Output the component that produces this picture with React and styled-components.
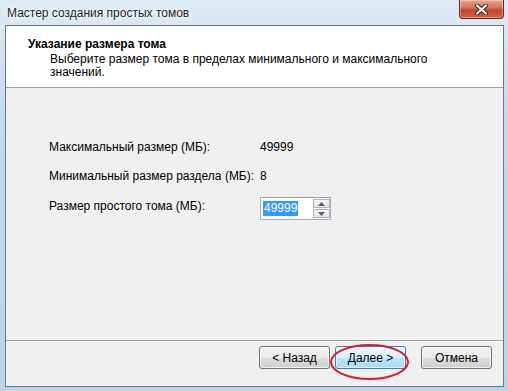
import React from 'react';
import styled, { createGlobalStyle } from 'styled-components';

const GlobalStyle = createGlobalStyle`
  html, body {
    margin: 0;
    padding: 0;
    background: #c9dcef;
  }
  body {
    font-family: "Liberation Sans", Arial, sans-serif;
    font-size: 12px;
    color: #000;
  }
`;

const Frame = styled.div`
  width: 508px;
  height: 391px;
  box-sizing: border-box;
  padding: 0 4px 4px 5px;
  display: flex;
  flex-direction: column;
  background: linear-gradient(180deg, #dfeaf5 0%, #c6d9ec 30%, #bcd3ea 100%);
`;

const TitleBar = styled.div`
  height: 25px;
  display: flex;
  align-items: flex-start;
  justify-content: space-between;
  flex-shrink: 0;
`;

const Title = styled.div`
  padding: 6px 0 0 2px;
  font-size: 12px;
  color: #1e1e1e;
  text-shadow: 0 0 6px #fff, 0 0 3px #fff;
`;

const CloseButton = styled.div`
  width: 45px;
  height: 19px;
  box-sizing: border-box;
  border: 1px solid #6b2b24;
  border-top: none;
  border-radius: 0 0 4px 4px;
  background: linear-gradient(180deg, #e8a493 0%, #d2715a 45%, #c1462d 55%, #d0623f 100%);
  box-shadow: inset 0 0 0 1px rgba(255, 255, 255, 0.35);
  display: flex;
  align-items: center;
  justify-content: center;
`;

const Client = styled.div`
  flex: 1;
  display: flex;
  flex-direction: column;
  border: 1px solid #6a7686;
  background: #f0f0f0;
`;

const Header = styled.div`
  height: 62px;
  flex-shrink: 0;
  background: #fff;
  border-bottom: 1px solid #a0a0a0;
  box-sizing: border-box;
  padding: 11px 0 0 22px;
`;

const HeaderTitle = styled.div`
  font-weight: bold;
  font-size: 12px;
  line-height: 14px;
`;

const HeaderText = styled.div`
  margin-left: 22px;
  width: 400px;
  line-height: 13px;
  padding-top: 2px;
`;

const Body = styled.div`
  flex: 1;
  display: grid;
  grid-template-columns: 211px auto;
  grid-auto-rows: min-content;
  row-gap: 15px;
  align-items: start;
  padding: 52px 0 0 43px;
  border-bottom: 1px solid #a0a0a0;
  box-shadow: 0 1px 0 #fff;
`;

const Label = styled.div`
  height: 14px;
  line-height: 14px;
  white-space: nowrap;
  margin-top: ${p => p.$tall ? '1px' : '0'};
`;

const Spin = styled.div`
  display: flex;
  width: 71px;
  height: 23px;
  box-sizing: border-box;
  border: 1px solid #abadb3;
  border-top-color: #8c9fb4;
  background: #fff;
  margin-top: -1px;
`;

const SpinText = styled.div`
  flex: 1;
  padding: 3px 0 0 2px;
`;

const Selected = styled.span`
  background: #3399ff;
  color: #fff;
  line-height: 15px;
  display: inline-block;
  padding: 0 1px;
`;

const Arrows = styled.div`
  width: 17px;
  display: flex;
  flex-direction: column;
  gap: 1px;
  padding: 1px 0;
`;

const Arrow = styled.div`
  flex: 1;
  border: 1px solid #b5b5b5;
  background: linear-gradient(180deg, #f6f6f6, #e2e2e2);
  display: flex;
  align-items: center;
  justify-content: center;
`;

const Footer = styled.div`
  height: 45px;
  flex-shrink: 0;
  display: flex;
  justify-content: flex-end;
  align-items: flex-start;
  padding: 5px 11px 0 0;
  box-sizing: border-box;
  gap: 5px;
`;

const ButtonWrap = styled.div`
  position: relative;
  margin-left: ${p => p.$gap || 0}px;
`;

const Button = styled.div`
  width: 71px;
  height: 23px;
  box-sizing: border-box;
  border: 1px solid ${p => p.$focus ? '#3c7fb1' : '#707070'};
  border-radius: 3px;
  background: ${p => p.$focus
    ? 'linear-gradient(180deg, #eaf6fd 0%, #d9f0fc 50%, #bee6fd 51%, #a7d9f5 100%)'
    : 'linear-gradient(180deg, #f2f2f2 0%, #ebebeb 50%, #dddddd 51%, #cfcfcf 100%)'};
  box-shadow: inset 0 0 0 1px rgba(255, 255, 255, 0.7);
  display: flex;
  align-items: center;
  justify-content: center;
`;

const Circle = styled.div`
  position: absolute;
  left: -5px;
  top: -2px;
  width: 79px;
  height: 36px;
  border: 2px solid #d6202a;
  border-radius: 50%;
  box-sizing: border-box;
  pointer-events: none;
`;

const Up = () => (
  <svg width="7" height="4" viewBox="0 0 7 4"><path d="M0 4 L3.5 0 L7 4 Z" fill="#4d6185" /></svg>
);
const Down = () => (
  <svg width="7" height="4" viewBox="0 0 7 4"><path d="M0 0 L3.5 4 L7 0 Z" fill="#4d6185" /></svg>
);

export default function App() {
  return (
    <>
      <GlobalStyle />
      <Frame>
        <TitleBar>
          <Title>Мастер создания простых томов</Title>
          <CloseButton>
            <svg width="13" height="11" viewBox="0 0 13 11">
              <path d="M2 1.5 L11 9.5 M11 1.5 L2 9.5" stroke="#3b1a16" strokeWidth="4" strokeLinecap="round" />
              <path d="M2 1.5 L11 9.5 M11 1.5 L2 9.5" stroke="#fff" strokeWidth="2.2" strokeLinecap="round" />
            </svg>
          </CloseButton>
        </TitleBar>
        <Client>
          <Header>
            <HeaderTitle>Указание размера тома</HeaderTitle>
            <HeaderText>Выберите размер тома в пределах минимального и максимального значений.</HeaderText>
          </Header>
          <Body>
            <Label>Максимальный размер (МБ):</Label>
            <Label>49999</Label>
            <Label>Минимальный размер раздела (МБ):</Label>
            <Label>8</Label>
            <Label $tall>Размер простого тома (МБ):</Label>
            <Spin>
              <SpinText><Selected>49999</Selected></SpinText>
              <Arrows>
                <Arrow><Up /></Arrow>
                <Arrow><Down /></Arrow>
              </Arrows>
            </Spin>
          </Body>
          <Footer>
            <ButtonWrap><Button>&lt; Назад</Button></ButtonWrap>
            <ButtonWrap>
              <Button $focus>Далее &gt;</Button>
              <Circle />
            </ButtonWrap>
            <ButtonWrap $gap={10}><Button>Отмена</Button></ButtonWrap>
          </Footer>
        </Client>
      </Frame>
    </>
  );
}
